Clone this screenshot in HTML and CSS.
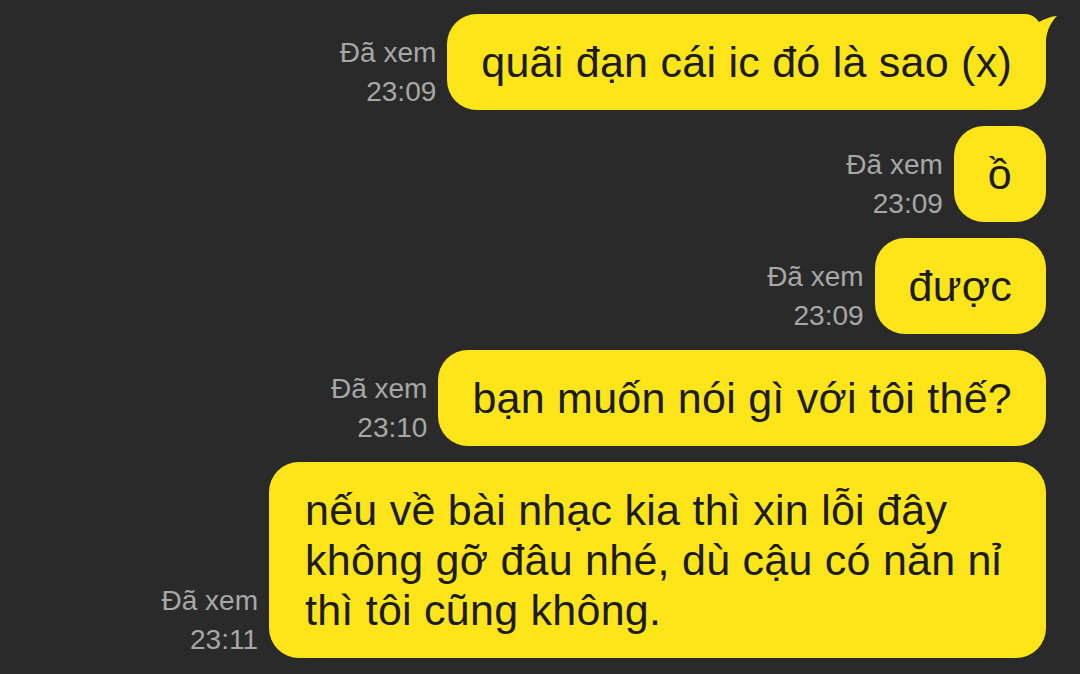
FILE: index.html
```html
<!DOCTYPE html>
<html lang="vi">
  <head>
    <meta charset="UTF-8" />
    <meta name="viewport" content="width=device-width, initial-scale=1.0" />
    <title>Chat</title>
    <link rel="stylesheet" href="styles.css">
  </head>
  <body>
    <div class="chat">
      <div class="row">
        <div class="meta">
          <div>Đã xem</div>
          <div>23:09</div>
        </div>
        <div class="bubble first">
          quãi đạn cái ic đó là sao (x)
          <svg class="tail" width="48" height="40" viewBox="0 0 48 40">
            <path d="M0 0 H16 C23 0 27 4 30 8 C36 5 42 2 48 2 C42 8 38 16 37 26 V40 H0 Z" />
          </svg>
        </div>
      </div>

      <div class="row">
        <div class="meta">
          <div>Đã xem</div>
          <div>23:09</div>
        </div>
        <div class="bubble">ồ</div>
      </div>

      <div class="row">
        <div class="meta">
          <div>Đã xem</div>
          <div>23:09</div>
        </div>
        <div class="bubble">được</div>
      </div>

      <div class="row">
        <div class="meta">
          <div>Đã xem</div>
          <div>23:10</div>
        </div>
        <div class="bubble">bạn muốn nói gì với tôi thế?</div>
      </div>

      <div class="row">
        <div class="meta">
          <div>Đã xem</div>
          <div>23:11</div>
        </div>
        <div class="bubble long">
          nếu về bài nhạc kia thì xin lỗi đây<br>
          không gỡ đâu nhé, dù cậu có năn nỉ<br>
          thì tôi cũng không.
        </div>
      </div>
    </div>
  </body>
</html>
```

FILE: styles.css
```css
body {
  margin: 0;
  background-color: #2a2a2a;
  font-family: "Liberation Sans", Arial, sans-serif;
}
.chat {
  display: flex;
  flex-direction: column;
  align-items: flex-end;
  gap: 16px;
  padding: 14px 34px 0 0;
}
.row {
  display: flex;
  align-items: flex-end;
  gap: 11px;
}
.meta {
  text-align: right;
  color: #a7a7a7;
  font-size: 28px;
  line-height: 39px;
  margin-bottom: -1px;
}
.bubble {
  position: relative;
  background-color: #fee51a;
  color: #1c1c1c;
  font-size: 43px;
  letter-spacing: 0.25px;
  line-height: 50px;
  padding: 23px 34px;
  border-radius: 30px;
}
.bubble.long {
  width: 705px;
  padding: 23px 36px;
}
.tail {
  position: absolute;
  top: 0;
  right: -11px;
  fill: #fee51a;
}
```
